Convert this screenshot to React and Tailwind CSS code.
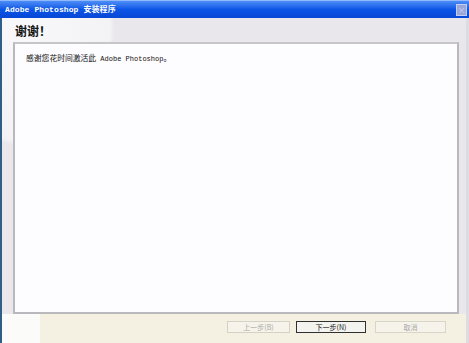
export default function App() {
  const cjk = { fontFamily: '"Noto Sans CJK SC", "Liberation Sans", sans-serif' };
  const mono = { fontFamily: '"Liberation Mono", "Noto Sans CJK SC", monospace' };
  return (
    <div className="w-[469px] h-[343px] flex flex-col overflow-hidden bg-[#e9e7ec]" style={cjk}>
      {/* Title bar */}
      <div className="h-[18px] flex items-center justify-between bg-gradient-to-b from-[#4d8df6] via-[#0b55e6] to-[#0747d6] border-t border-[#8fb8ff] pl-[5px] pr-[2px]">
        <span className="text-[8px] leading-none text-white font-bold tracking-[0.1px]" style={mono}>
          Adobe Photoshop 安装程序
        </span>
        <div className="w-[11px] h-[12px] bg-[#98a6da] border border-[#c5cdf0] flex items-center justify-center text-[8px] leading-none text-[#c9d1f2]">
          ×
        </div>
      </div>
      {/* Body */}
      <div className="flex-1 flex flex-col border-l-[2px] border-[#2f5f86] border-r-[3px] border-r-[#dcdce2] bg-[radial-gradient(ellipse_110px_140px_at_20px_10px,#f8f8fa_0%,#f3f2f5_80%,#e9e7ec_84%)]">
        <div className="h-[24px] flex items-center pl-[13px] pt-[1px]">
          <span className="text-[12px] leading-none font-bold text-[#111]" style={cjk}>谢谢！</span>
        </div>
        <div className="ml-[11px] mr-[7px] h-[272px] bg-[#fdfcfe] border-[2px] border-[#b9b8bd] border-t-[#c6c5ca] pl-[11px] pt-[8px]">
          <p className="text-[7.8px] leading-[12px] text-[#111]" style={cjk}>
            感谢您花时间激活此<span className="text-[7px]" style={mono}> Adobe Photoshop</span>。
          </p>
        </div>
        <div className="flex-1 flex">
          <div className="w-[38px] bg-[#fbfbfa]" />
          <div className="flex-1 bg-[#f4f0e2] flex items-start pt-[7px] pl-[187px] gap-[6px]">
            <div className="w-[63px] h-[12px] border border-[#d4d1c6] bg-[#f6f3ea] flex items-center justify-center text-[7px] leading-none text-[#a9a9a9]">
              上一步(B)
            </div>
            <div className="w-[70px] h-[12px] border border-[#303030] bg-[#f3f3f0] flex items-center justify-center text-[7px] leading-none text-[#111]">
              下一步(N)
            </div>
            <div className="w-[71px] h-[12px] ml-[3px] border border-[#d8d5cb] bg-[#f6f3ea] flex items-center justify-center text-[7px] leading-none text-[#a9a9a9]">
              取消
            </div>
          </div>
        </div>
      </div>
    </div>
  );
}
